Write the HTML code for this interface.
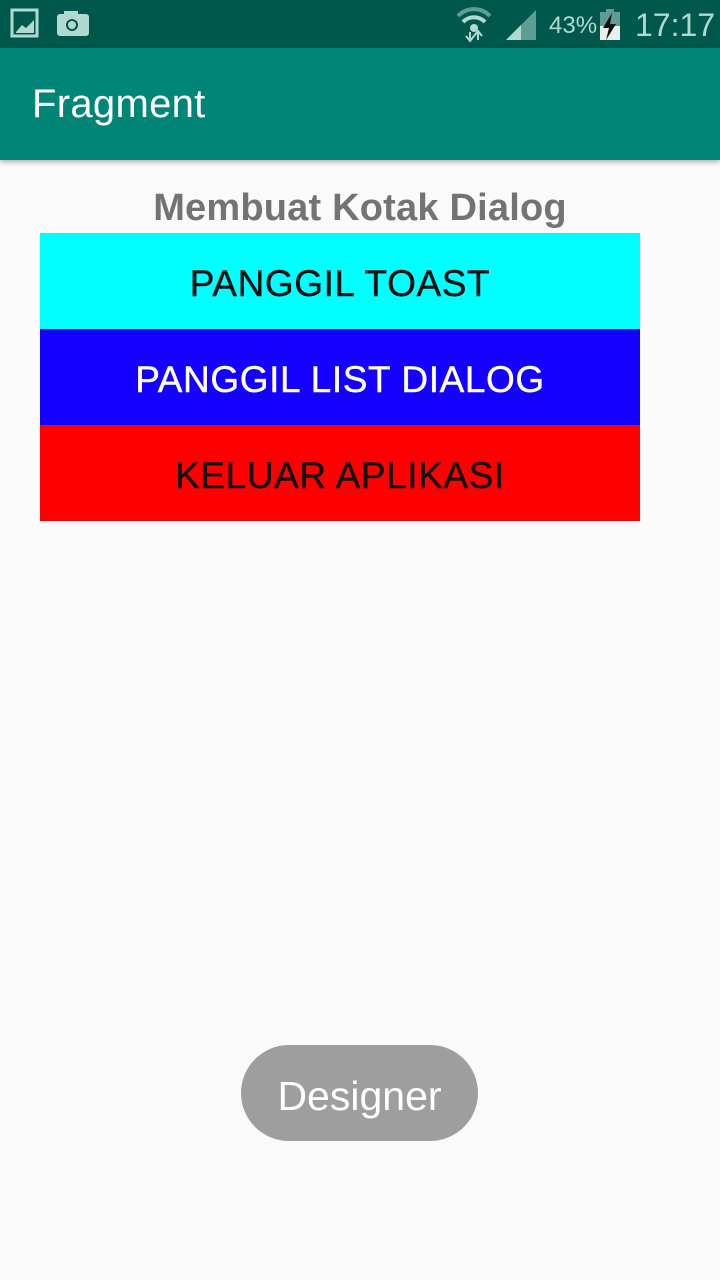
<!DOCTYPE html>
<html><head><meta charset="utf-8"><style>
body{margin:0;width:720px;height:1280px;background:#fafafa;font-family:"Liberation Sans",sans-serif;position:relative;overflow:hidden}
.sb{position:absolute;top:0;left:0;width:720px;height:48px;background:#00574b}
.ab{position:absolute;top:48px;left:0;width:720px;height:112px;background:#008577;box-shadow:0 2px 5px rgba(0,0,0,.3)}
.ab span{position:absolute;left:32px;top:34px;color:#fff;font-size:40px;letter-spacing:0.3px}
.title{position:absolute;top:187px;left:0;width:720px;text-align:center;font-size:38px;font-weight:bold;color:#737373;letter-spacing:0.2px}
.b{position:absolute;left:40px;width:600px;height:96px;line-height:102px;text-align:center;font-size:37px;letter-spacing:0.6px;-webkit-text-stroke:0.4px currentColor}
.toast{position:absolute;left:241px;top:1045px;width:237px;height:96px;border-radius:48px;background:#9e9e9e;color:#fff;font-size:41px;text-align:center;line-height:102px}
</style></head><body>
<div class="sb">
<svg width="720" height="48" style="position:absolute;left:0;top:0">
<rect x="12" y="10" width="25" height="26" fill="none" stroke="#b2d8d2" stroke-width="3"/>
<path d="M16 32 L22 25 L26 28 L34 20 L34 33 L16 33Z" fill="#b2d8d2"/>
<rect x="57" y="14" width="32" height="22" rx="3" fill="#b2d8d2"/>
<rect x="64" y="11" width="14" height="5" fill="#b2d8d2"/>
<circle cx="72" cy="25" r="6" fill="#00574b"/><circle cx="72" cy="25" r="4" fill="#b2d8d2"/>
<path d="M458 16 A22 22 0 0 1 490 16" stroke="#5f9c93" stroke-width="4" fill="none"/>
<path d="M463 22 A15 15 0 0 1 485 22" stroke="#b2d8d2" stroke-width="4" fill="none"/>
<circle cx="474" cy="28" r="4" fill="#b2d8d2"/>
<path d="M470 32 v8 M466 36 l4 5 4-5 M478 40 v-8 M474 36 l4-5 4 5" stroke="#b2d8d2" stroke-width="2" fill="none"/>
<path d="M506 40 L536 10 L536 40Z" fill="#5f9c93"/><path d="M506 40 L521 25 L521 40Z" fill="#b2d8d2"/>
<text x="549" y="33" font-size="24" fill="#b2d8d2" font-family="Liberation Sans">43%</text>
<rect x="600" y="12" width="20" height="28" fill="#5f9c93"/><rect x="606" y="9" width="8" height="4" fill="#5f9c93"/>
<rect x="600" y="26" width="20" height="14" fill="#e8f0ee"/>
<path d="M612 13 L603 28 L609 28 L606 40 L616 24 L610 24Z" fill="#111"/>
<text x="635" y="36" font-size="32" fill="#b2d8d2" font-family="Liberation Sans">17:17</text>
</svg></div>
<div class="ab"><span>Fragment</span></div>
<div class="title">Membuat Kotak Dialog</div>
<div class="b" style="top:233px;background:#00ffff;color:#111">PANGGIL TOAST</div>
<div class="b" style="top:329px;background:#1400ff;color:#fff">PANGGIL LIST DIALOG</div>
<div class="b" style="top:425px;background:#ff0000;color:#111">KELUAR APLIKASI</div>
<div class="toast">Designer</div>
</body></html>
